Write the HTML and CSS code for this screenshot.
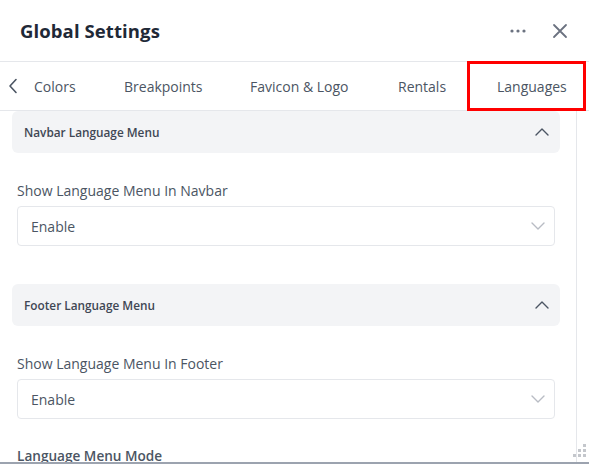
FILE: index.html
```html
<!DOCTYPE html>
<html>
<head>
<meta charset="utf-8">
<link rel="stylesheet" href="styles.css">
</head>
<body>
<div class="panel">
  <header class="top">
    <h1 class="title">Global Settings</h1>
    <div class="actions">
      <svg class="dots" width="16" height="4" viewBox="0 0 16 4"><circle cx="2" cy="2" r="1.6"/><circle cx="8" cy="2" r="1.6"/><circle cx="14" cy="2" r="1.6"/></svg>
      <svg class="close" width="16" height="16" viewBox="0 0 16 16"><path d="M2 2L14 14M14 2L2 14"/></svg>
    </div>
  </header>
  <nav class="tabs">
    <div class="tab back"><svg width="10" height="16" viewBox="0 0 10 16"><path d="M8 1.5L2 8l6 6.5"/></svg></div>
    <div class="tab t1">Colors</div>
    <div class="tab t2">Breakpoints</div>
    <div class="tab t3">Favicon &amp; Logo</div>
    <div class="tab t4">Rentals</div>
    <div class="tab t5">Languages</div>
  </nav>
  <div class="body">
    <main class="content">
      <section class="group">
        <div class="group-head">
          <span>Navbar Language Menu</span>
          <svg width="14" height="8" viewBox="0 0 14 8"><path d="M1 7L7 1l6 6"/></svg>
        </div>
        <div class="field">
          <label class="label">Show Language Menu In Navbar</label>
          <div class="select"><span>Enable</span><svg width="14" height="8" viewBox="0 0 14 8"><path d="M1 1l6 6 6-6"/></svg></div>
        </div>
      </section>
      <section class="group second">
        <div class="group-head">
          <span>Footer Language Menu</span>
          <svg width="14" height="8" viewBox="0 0 14 8"><path d="M1 7L7 1l6 6"/></svg>
        </div>
        <div class="field">
          <label class="label">Show Language Menu In Footer</label>
          <div class="select"><span>Enable</span><svg width="14" height="8" viewBox="0 0 14 8"><path d="M1 1l6 6 6-6"/></svg></div>
        </div>
        <div class="field third">
          <label class="label strong">Language Menu Mode</label>
        </div>
      </section>
    </main>
    <div class="track"></div>
  </div>
  <svg class="grip" width="14" height="14" viewBox="0 0 14 14"><rect x="10" y="0" width="3" height="3"/><rect x="10" y="5" width="3" height="3"/><rect x="5" y="5" width="3" height="3"/><rect x="10" y="10" width="3" height="3"/><rect x="5" y="10" width="3" height="3"/><rect x="0" y="10" width="3" height="3"/></svg>
  <div class="bottom-strip"></div>
</div>
</body>
</html>
```
FILE: styles.css
```css
html, body {
  margin: 0;
  padding: 0;
  background: #fff;
}
body {
  font-family: "Open Sans", "Noto Sans", sans-serif;
  color: #4b5563;
  width: 589px;
  height: 464px;
  overflow: hidden;
}
.panel {
  position: relative;
  width: 589px;
  height: 464px;
  overflow: hidden;
}
.top {
  border-bottom: 1px solid #e5e7eb;
  display: flex;
  align-items: center;
  justify-content: space-between;
  padding: 0 21px 0 20px;
  box-sizing: border-box;
  height: 62px;
}
.title {
  margin: 0;
  font-size: 18.5px;
  font-weight: 700;
  color: #1f2937;
  letter-spacing: 0.1px;
}
.actions {
  display: flex;
  align-items: center;
  gap: 26px;
}
.dots { fill: #6b7280; }
.close { stroke: #6b7280; stroke-width: 1.8; fill: none; stroke-linecap: round; }
.tabs {
  display: flex;
  height: 49px;
  border-bottom: 1px solid #e5e7eb;
  box-sizing: border-box;
  font-size: 14px;
  color: #4b5563;
}
.tab {
  display: flex;
  align-items: center;
  box-sizing: border-box;
  white-space: nowrap;
}
.back { width: 34px; padding-left: 8px; }
.back svg path { stroke: #4b5563; stroke-width: 1.6; fill: none; stroke-linecap: round; stroke-linejoin: round; }
.t1 { width: 90px; }
.t2 { width: 126px; }
.t3 { width: 148px; }
.t4 { width: 69px; }
.t5 {
  width: 119px;
  border: 3px solid #ff0000;
  padding-left: 27px;
  margin-top: -1px;
  height: 50px;
}
.body {
  display: flex;
  height: 360px;
}
.content {
  width: 549px;
  margin-left: 12px;
}
.track {
  margin-left: 16px;
  width: 12px;
  border-left: 1px solid #e5e7eb;
}
.group-head {
  height: 42px;
  background: #f3f4f6;
  border-radius: 6px;
  display: flex;
  align-items: center;
  justify-content: space-between;
  padding: 0 11px 0 12px;
  font-size: 11.8px;
  font-weight: 600;
  color: #3f4754;
}
.group-head svg path, .select svg path {
  fill: none;
  stroke-width: 1.4;
  stroke-linecap: round;
  stroke-linejoin: round;
}
.group-head svg path { stroke: #4b5563; }
.select svg path { stroke: #b8bcc4; }
.field {
  padding: 28px 5px 0;
}
.label {
  display: block;
  font-size: 14px;
  line-height: 20px;
  font-weight: 500;
  color: #4b5563;
  margin-bottom: 5px;
}
.label.strong { font-weight: 600; font-size: 13.6px; }
.select {
  height: 40px;
  box-sizing: border-box;
  border: 1px solid #e5e7eb;
  border-radius: 4px;
  display: flex;
  align-items: center;
  justify-content: space-between;
  padding: 0 9px 0 13px;
  font-size: 14px;
  color: #4b5563;
}
.second { margin-top: 38px; }
.third { padding-top: 27px; }
.grip {
  position: absolute;
  right: 2px;
  bottom: 6px;
  fill: #c4c7cc;
}
.bottom-strip {
  position: absolute;
  left: 0;
  right: 0;
  bottom: 0;
  height: 2px;
  background: #9ca3af;
}
```
